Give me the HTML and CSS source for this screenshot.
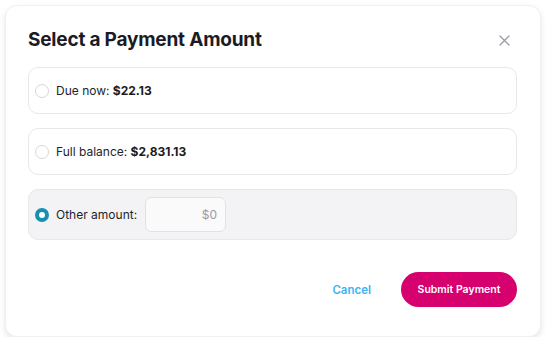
FILE: index.html
```html
<!DOCTYPE html>
<html>
<head>
<meta charset="utf-8">
<link rel="stylesheet" href="styles.css">
</head>
<body>
<div class="modal">
  <div class="header">
    <h1 class="title">Select a Payment Amount</h1>
    <button class="close" aria-label="Close">
      <svg width="11" height="11" viewBox="0 0 11 11"><path d="M1 1L10 10M10 1L1 10" stroke="#9a9aa2" stroke-width="1.3" stroke-linecap="round"/></svg>
    </button>
  </div>
  <div class="options">
    <label class="option">
      <span class="radio"></span>
      <span class="label">Due now: <b>$22.13</b></span>
    </label>
    <label class="option">
      <span class="radio"></span>
      <span class="label">Full balance: <b>$2,831.13</b></span>
    </label>
    <label class="option selected">
      <span class="radio checked"></span>
      <span class="label">Other amount:</span>
      <span class="amount">$0</span>
    </label>
  </div>
  <div class="footer">
    <button class="cancel">Cancel</button>
    <button class="submit">Submit Payment</button>
  </div>
</div>
</body>
</html>
```

FILE: styles.css
```css
* { box-sizing: border-box; }
body {
  margin: 0;
  background: #ffffff;
  font-family: Inter, "Noto Sans", sans-serif;
  color: #23232b;
}
.modal {
  margin: 5px 5px 0 5px;
  width: 536px;
  height: 332px;
  background: #fff;
  border: 1px solid #f0f0f2;
  border-radius: 12px;
  box-shadow: 0 3px 6px rgba(0,0,0,0.10);
  padding: 20px 23px 0 22px;
}
.header {
  display: flex;
  align-items: center;
  justify-content: space-between;
  height: 26px;
}
.title {
  margin: 0;
  font-size: 19px;
  font-weight: 700;
  color: #1b1b24;
  letter-spacing: -0.2px;
}
.close {
  border: none;
  background: none;
  padding: 0;
  margin-right: 7px;
  margin-top: 2px;
  display: flex;
}
.options {
  margin-top: 15px;
  display: flex;
  flex-direction: column;
  gap: 14px;
}
.option {
  display: flex;
  align-items: center;
  height: 47px;
  border: 1px solid #e8e8eb;
  border-radius: 10px;
  padding: 0 13px 0 6px;
  font-size: 12px;
}
.option.selected {
  height: 51px;
  background: #f3f3f5;
}
.radio {
  width: 14px;
  height: 14px;
  border-radius: 50%;
  border: 1px solid #d7d7dc;
  background: #fff;
  margin-right: 7px;
}
.radio.checked {
  border: 4px solid #1690b2;
}
.label b { font-weight: 700; color: #1b1b24; }
.amount {
  margin-left: 8px;
  width: 81px;
  height: 35px;
  border: 1px solid #e2e2e5;
  border-radius: 6px;
  background: #fafafa;
  display: flex;
  align-items: center;
  justify-content: flex-end;
  padding-right: 8px;
  color: #9b9ba3;
  font-size: 12px;
}
.footer {
  margin-top: 32px;
  display: flex;
  justify-content: flex-end;
  align-items: center;
}
.cancel {
  border: none;
  background: none;
  font-family: inherit;
  font-size: 11.5px;
  font-weight: 600;
  color: #3fb3f0;
  padding: 0;
  margin-right: 30px;
}
.submit {
  border: none;
  width: 116px;
  height: 35px;
  border-radius: 18px;
  background: #d6006f;
  color: #fff;
  font-family: inherit;
  font-size: 10.5px;
  font-weight: 600;
}
```
